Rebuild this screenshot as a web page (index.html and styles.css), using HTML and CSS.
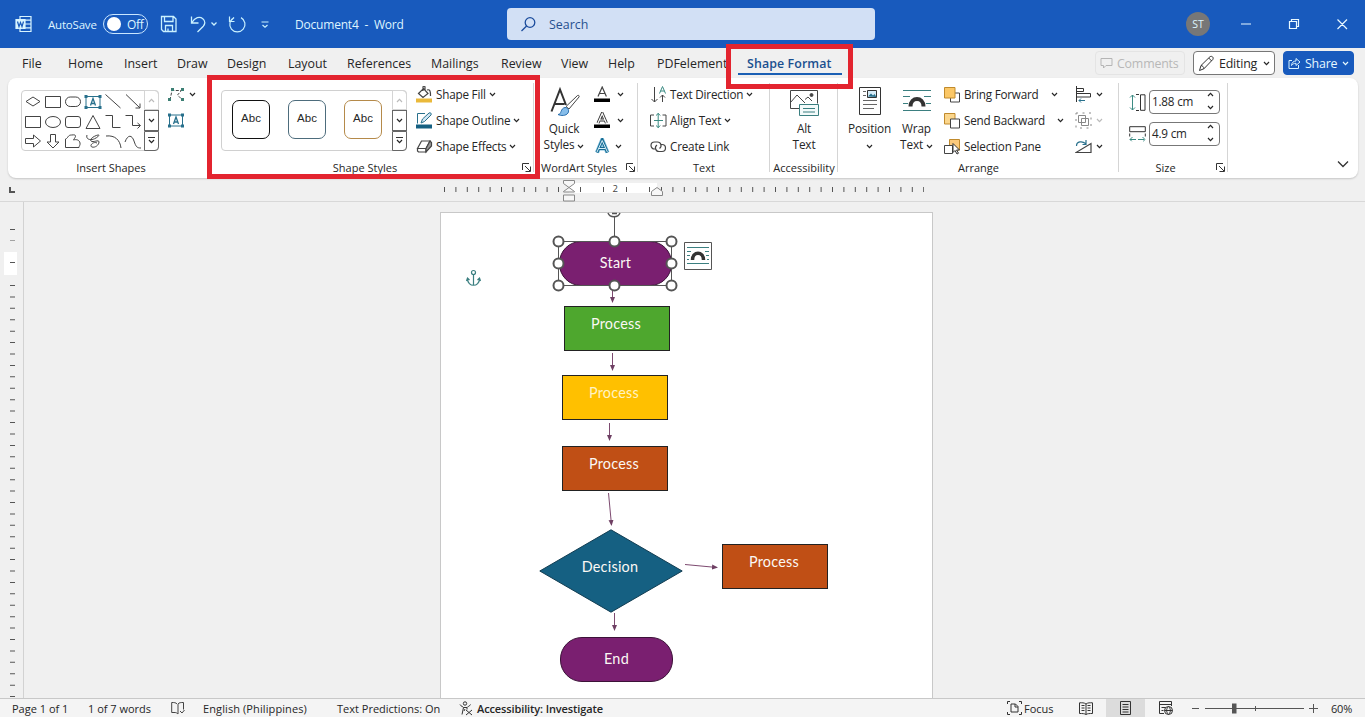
FILE: index.html
```html
<!DOCTYPE html>
<html lang="en">
<head>
  <meta charset="UTF-8" />
  <title>Document4 - Word</title>
  <meta name="viewport" content="width=device-width, initial-scale=1">
  <link rel="stylesheet" href="styles.css">
</head>
<body>
  <svg class="defs" width="0" height="0">
    <symbol id="chev" viewBox="0 0 7 5"><path d="M1 1l2.5 2.6L6 1" fill="none" stroke="currentColor" stroke-width="1.2"/></symbol>
    <symbol id="launch" viewBox="0 0 9 9"><path d="M.5 7V.5H7M3 3l5 5M8.5 3.5v5h-5" fill="none" stroke="#333"/></symbol>
  </svg>

  <header class="titlebar">
    <svg class="logo" width="18" height="18" viewBox="0 0 18 18" fill="none" stroke="#d8f4ff" stroke-width="1.2">
      <path d="M5 4V1.5h11v15H5V14M10 5.2h6M10 9h6M10 12.8h6"/>
      <path d="M1 4.5h9v9H1z" fill="#d8f4ff"/>
      <path d="M2.5 6.5l1.500 5 1.500-4 1.500 4 1.500-5" stroke="#185abd"/>
    </svg>
    <span class="autosave">AutoSave</span>
    <span class="switch"><i></i>Off</span>
    <svg class="quick" width="112" height="20" viewBox="0 0 112 20" fill="none" stroke="#c9f1ff" stroke-width="1.3">
      <path d="M1.500 2.500h12l2.500 2.500v12.500H3.500l-2-2zM4.500 2.500v5h8.500v-5M5.500 17.500v-6h7v6M8 17.500v-3"/>
      <path d="M31.500 2.500v6.500h7M31.800 8.700c3-5.500 8-6.500 11-4s2.200 5.500.5 7.500L37.500 18"/>
      <path d="M51.500 8.500l2.500 2.500 2.500-2.500"/>
      <path d="M69.500 2.500v5h5M81 3.600a7.600 7.600 0 1 1-7-.1l-3.500 3.500" stroke-width="1.200"/>
      <path d="M101.500 8h7M102.500 11l2.500 2.300 2.500-2.300" stroke-width="1.200"/>
    </svg>
    <span class="doc-title">Document4&nbsp; -&nbsp; Word</span>
    <div class="search">
      <svg width="17" height="17" viewBox="0 0 17 17" fill="none" stroke="#1b4c9c" stroke-width="1.3"><circle cx="10" cy="6.500" r="4.800"/><path d="M6.600 10L1.500 15"/></svg>
      <span>Search</span>
    </div>
    <span class="avatar">ST</span>
    <svg class="window-buttons" width="110" height="14" viewBox="0 0 110 14" fill="none" stroke="#e8f8ff" stroke-width="1.2">
      <path d="M1 7h10M49.500 4.500h7v7h-7zM51.500 4.500V2.500h7v7h-2M97.500 2.500l9.500 9.500M107 2.500l-9.500 9.500"/>
    </svg>
  </header>

  <nav class="tabs">
    <span>File</span><span>Home</span><span>Insert</span><span>Draw</span><span>Design</span><span>Layout</span><span>References</span><span>Mailings</span><span>Review</span><span>View</span><span>Help</span><span>PDFelement</span>
    <span class="active">Shape Format</span>
    <div class="tab-actions">
      <span class="btn comments"><svg width="13" height="12" viewBox="0 0 13 12" fill="none" stroke="#b5b5b5"><path d="M1 1.500h11v7H6L3.500 11V8.500H1z"/></svg>Comments</span>
      <span class="btn editing"><svg width="17" height="17" viewBox="0 0 17 17" fill="none" stroke="#333"><path d="M1.500 15.500L3 10.500 12 1.700c2-1.200 4 .8 2.800 2.800L6 13.700zM3 10.500c1.600.2 2.800 1.500 3 3.200M10.700 3l3 3"/></svg>Editing<svg class="chev"><use href="#chev"/></svg></span>
      <span class="btn share"><svg width="13" height="12" viewBox="0 0 13 12" fill="none" stroke="#d7f3ff"><path d="M4 3.500H1v8h9.500V8M3.500 8.500c.3-3 2-4.500 4.500-4.500V1.500L12 5 8 8.500V6.300c-2 0-3.300.6-4.500 2.200z"/></svg>Share<svg class="chev"><use href="#chev"/></svg></span>
    </div>
  </nav>

  <section class="ribbon">
    <div class="group insert-shapes">
      <div class="body">
        <div class="gallery">
          <svg width="122" height="60" viewBox="0 0 122 60" fill="none" stroke="#444">
            <path d="M4 10.500l7-4.500 7 4.500-7 4.500zM23.500 5.500h15v11h-15z"/>
            <rect x="43.500" y="6" width="15" height="9.500" rx="4.700"/>
            <path d="M64 5.500h14v11H64z" stroke="#28708c"/>
            <path d="M62.500 4h3v3h-3zM76.500 4h3v3h-3zM62.500 15h3v3h-3zM76.500 15h3v3h-3z" fill="#28708c" stroke="none"/>
            <path d="M68.500 14.500l2.500-7 2.500 7M69.500 12.500h3" stroke="#28708c" stroke-width="1.300"/>
            <path d="M83.500 3.500l15 13.500M104 3.500l14 13.500M118 12.500V17h-4.500"/>
            <path d="M3.500 25.500h15v11h-15z"/>
            <ellipse cx="31" cy="31" rx="7.500" ry="5.500"/>
            <rect x="43.500" y="25.500" width="15" height="11" rx="2.500"/>
            <path d="M71 24.500l7 13H64zM83.500 24.500h7v12h8M103.500 24.500h7v10h7.500M115.500 32l3 2.500-3 3"/>
            <path d="M3.500 47.500h8V44l7 6-7 6v-3.500h-8zM28.500 43.500h5v7.500h3.500L31 57l-6-6h3.500z"/>
            <path d="M43.500 56.500V48c3-1 2-4 6-4 7-1 3 3 2 5 3-1 6 0 6.500 3 .5 2-1 3-1 4.500z"/>
            <path d="M65 44c-1 3 1 5 5 4.500s9-5 6-4.500-9 4-7 6 8-2 8 1-4 6-7 5 1-6 5-4"/>
            <path d="M84 45c9-1 14 4 15 12M103 51c3-8 7-7 9-1s3 7 7 7"/>
          </svg>
          <div class="scroller"><span class="off"><svg class="chev up"><use href="#chev"/></svg></span><span><svg class="chev"><use href="#chev"/></svg></span><span class="more"><svg class="chev"><use href="#chev"/></svg></span></div>
        </div>
        <div class="stack edit-shape">
          <span class="row"><svg width="17" height="15" viewBox="0 0 17 15" fill="none" stroke="#444"><path d="M2 13l2-9.500h9.500L9.500 8l5 5" stroke-dasharray="3 1.500"/><path d="M3 1h3v3H3zM13 1h3v3h-3zM0 11h3v3H0zM13 11h3v3h-3z" fill="#3c7f74" stroke="none"/></svg><svg class="chev"><use href="#chev"/></svg></span>
          <span class="row"><svg width="17" height="15" viewBox="0 0 17 15" fill="none" stroke="#28708c"><path d="M1.500 2h13v11h-13z"/><path d="M0 .5h3v3H0zM13 .5h3v3h-3zM0 11.500h3v3H0zM13 11.500h3v3h-3z" fill="#28708c" stroke="none"/><path d="M5.500 11l2.500-7 2.500 7M6.500 9h3" stroke-width="1.300"/></svg></span>
        </div>
      </div>
      <div class="label">Insert Shapes</div>
    </div>

    <div class="group shape-styles">
      <div class="body">
        <div class="gallery">
          <div class="presets"><span>Abc</span><span class="blue">Abc</span><span class="gold">Abc</span></div>
          <div class="scroller"><span class="off"><svg class="chev up"><use href="#chev"/></svg></span><span><svg class="chev"><use href="#chev"/></svg></span><span class="more"><svg class="chev"><use href="#chev"/></svg></span></div>
        </div>
        <div class="stack">
          <span class="row"><svg width="17" height="17" viewBox="0 0 17 17" fill="none" stroke="#444"><path d="M2.500 7.500l5-5 4.500 5-5 4zM7 5V.8C7.500 0 8.800 0 9 1v3M11 4c3-1 3.500 1 3.500 6" stroke-width="1.200"/><path d="M0 12.500h16v4H0z" fill="#eab93a" stroke="none"/></svg>Shape Fill<svg class="chev"><use href="#chev"/></svg></span>
          <span class="row"><svg width="17" height="17" viewBox="0 0 17 17" fill="none" stroke="#28708c"><path d="M9 1.500H1.500v10"/><path d="M5 11l1.500-4L13 1c1.500-.8 2.800.5 2 2L8.500 9.500z" fill="#cfe6f5"/><path d="M0 12.500h16v4H0z" fill="#156082" stroke="none"/></svg>Shape Outline<svg class="chev"><use href="#chev"/></svg></span>
          <span class="row"><svg width="17" height="17" viewBox="0 0 17 17" fill="none" stroke="#444" stroke-width="1.2"><path d="M5.500 3h8.500L10 10.500H1.500zM1.500 10.500V13l1 1H10v-3.500"/><path d="M10 10.500L14 3l1.500 1.500V8L10 14z" fill="#999"/></svg>Shape Effects<svg class="chev"><use href="#chev"/></svg></span>
        </div>
      </div>
      <div class="label">Shape Styles<svg class="launch"><use href="#launch"/></svg></div>
    </div>

    <div class="group wordart">
      <div class="body">
        <div class="big">
          <svg width="32" height="32" viewBox="0 0 32 32" fill="none"><path d="M3.500 25.500L12 3.500 18 19M6.500 18h10" stroke="#333" stroke-width="2"/><path d="M18 20.500L29.500 9.500c1.500-.5 2 .5 1.500 1.500L21 23z" fill="#fff" stroke="#444"/><path d="M10 28.500c4 0 2-6 7-7 3 0 4.500 3 3 5.500-2 3-7 3-10 1.500z" fill="#86bdea" stroke="#2a6fae"/></svg>
          <span>Quick</span><span>Styles <svg class="chev"><use href="#chev"/></svg></span>
        </div>
        <div class="stack">
          <span class="row"><svg width="17" height="17" viewBox="0 0 17 17"><path d="M4 10.500L8.200 1l4.200 9.500M5.500 7.500h5.500" fill="none" stroke="#444" stroke-width="1.2"/><path d="M0 12.500h16v3.500H0z"/></svg><svg class="chev"><use href="#chev"/></svg></span>
          <span class="row"><svg width="17" height="17" viewBox="0 0 17 17"><path d="M4 11L8.200 1.500l4.200 9.500M5.500 8h5.500" fill="none" stroke="#333" stroke-width="3"/><path d="M4 11L8.200 1.500l4.200 9.500M5.500 8h5.500" fill="none" stroke="#fff" stroke-width="1.2"/><path d="M0 12.500h16v3.500H0z"/></svg><svg class="chev"><use href="#chev"/></svg></span>
          <span class="row glow"><svg width="17" height="17" viewBox="0 0 17 17" fill="none"><path d="M3 14.500L8.200 2l5.200 12.500M5 10.500h6.500" stroke="#79bcdc" stroke-width="4.200"/><path d="M3 14.500L8.200 2l5.200 12.500M5 10.500h6.500" stroke="#176a91" stroke-width="2.800"/><path d="M3 14L8.200 2.500 13.400 14M5 10.500h6.500" stroke="#d9f0fa" stroke-width="1"/></svg><svg class="chev"><use href="#chev"/></svg></span>
        </div>
      </div>
      <div class="label">WordArt Styles<svg class="launch"><use href="#launch"/></svg></div>
    </div>

    <div class="group text-group">
      <div class="body">
        <div class="stack">
          <span class="row"><svg width="17" height="17" viewBox="0 0 17 17" fill="none" stroke="#444"><path d="M4.500 1v15M1.500 13l3 3 3-3M12.500 16V9M10 11.500L12.500 9l2.500 2.500"/><path d="M9.500 7.500l3-7 3 7M10.500 5h4" stroke="#3b8b83"/></svg>Text Direction<svg class="chev"><use href="#chev"/></svg></span>
          <span class="row"><svg width="17" height="15" viewBox="0 0 17 15" fill="none" stroke="#444"><path d="M4 2H.5v11H4M12.500 2H16v11h-3.500"/><path d="M8.200 0v15M6 2.500L8.200.5l2.200 2M6 12.500l2.200 2 2.200-2M4 7.500h9" stroke="#3b8b83"/></svg>Align Text<svg class="chev"><use href="#chev"/></svg></span>
          <span class="row"><svg width="17" height="13" viewBox="0 0 17 13" fill="none" stroke="#444" stroke-width="1.2"><path d="M6 9H4.500a3.500 3.500 0 0 1 0-7h3a3.500 3.500 0 0 1 2 6.400M10.500 4.500h1.500a3.500 3.500 0 0 1 0 7H9a3.500 3.500 0 0 1-2-6.400"/></svg>Create Link</span>
        </div>
      </div>
      <div class="label">Text</div>
    </div>

    <div class="group access">
      <div class="body">
        <div class="big">
          <svg width="30" height="32" viewBox="0 0 30 32" fill="none" stroke="#444"><path d="M10 22.500H1.500v-18h27v13M1.500 16.500L8 9l8 8M16 13.500l3-2.500 4 4"/><circle cx="22.500" cy="9" r="1.500" fill="#444"/><path d="M10.500 18.500h19v11h-19z" fill="#f3fafa" stroke="#3b7f80"/><path d="M14 22.500h12M14 26h12" stroke="#3b7f80"/></svg>
          <span>Alt</span><span>Text</span>
        </div>
      </div>
      <div class="label">Accessibility</div>
    </div>

    <div class="group arrange">
      <div class="body">
        <div class="big position">
          <svg width="22" height="32" viewBox="0 0 22 32" fill="none" stroke="#333"><path d="M.5 1.500h21v27H.5z"/><path d="M4 5.500h3M4 9.500h3M4 14.500h14M4 18.500h14M4 22.500h11" stroke="#666"/><path d="M8.500 4.500h9v7h-9z" fill="#d6ecf8"/><path d="M9 10.500l3-3 2 2 1.500-1.500 2 3z" fill="#28708c" stroke="none"/></svg>
          <span>Position</span><span><svg class="chev"><use href="#chev"/></svg></span>
        </div>
        <div class="big wrap">
          <svg width="28" height="32" viewBox="0 0 28 32" fill="none"><path d="M0 4.500h28M0 10.500h7M21 10.500h7M0 17.500h5M23 17.500h5M0 24.500h28" stroke="#3b7f80"/><path d="M7.500 20.500c0-10 13-10 13 0" stroke="#333" stroke-width="4"/></svg>
          <span>Wrap</span><span>Text <svg class="chev"><use href="#chev"/></svg></span>
        </div>
        <div class="stack order">
          <span class="row"><svg width="16" height="17" viewBox="0 0 16 17" fill="none" stroke="#444"><path d="M11 7h4.500v9h-9v-4"/><path d="M.5 1.500H11V12H.5z" fill="#fbc766" stroke="#c08a2c"/></svg>Bring Forward<svg class="chev"><use href="#chev"/></svg></span>
          <span class="row"><svg width="16" height="17" viewBox="0 0 16 17"><path d="M.5 1.500H11V12H.5z" fill="#fbd68c" stroke="#c08a2c"/><path d="M6.500 7h9v9h-9z" fill="#fff" stroke="#444"/></svg>Send Backward<svg class="chev"><use href="#chev"/></svg></span>
          <span class="row"><svg width="16" height="17" viewBox="0 0 16 17" fill="#fff"><path d="M5.500 1.500h10V12h-10z" fill="#fbc97c" stroke="#c08a2c"/><path d="M.5 7.500h8v8h-8z" stroke="#444"/><path d="M9 5.500v9l2-2 2 3.500 1.500-.8-2-3.200h3z" stroke="#333"/></svg>Selection Pane</span>
        </div>
        <div class="stack align">
          <span class="row"><svg width="17" height="17" viewBox="0 0 17 17" fill="none" stroke="#333"><path d="M1.500 0v16M1.500 2.500h7v3h-7M1.500 7.500H15.500v3.500H1.500"/><path d="M4 14.500h6M6 12.500l-2 2 2 2" stroke="#28708c"/></svg><svg class="chev"><use href="#chev"/></svg></span>
          <span class="row dim"><svg width="17" height="17" viewBox="0 0 17 17" fill="none" stroke="#888"><path d="M3.500 3.500h7v7h-7zM6.500 6.500h7v7h-7z"/><path d="M1 1h15v15H1z" stroke-dasharray="2 4.500"/></svg><svg class="chev"><use href="#chev"/></svg></span>
          <span class="row"><svg width="17" height="17" viewBox="0 0 17 17" fill="none" stroke="#444" stroke-width="1.2"><path d="M1 14.500h15v-9z"/><path d="M1.500 8c0-5 6-5 9-2.500M7.500 6.500h3.500V2" stroke="#28708c"/></svg><svg class="chev"><use href="#chev"/></svg></span>
        </div>
      </div>
      <div class="label">Arrange</div>
    </div>

    <div class="group size">
      <div class="body">
        <div class="field">
          <svg width="17" height="17" viewBox="0 0 17 17" fill="none"><path d="M3.500 1v15M1 3.500L3.500 1 6 3.500M1 13.500L3.500 16 6 13.500" stroke="#3b8b83"/><path d="M7 .5h3M7 16.500h3M11.500 .8h4.500v15.500h-4.500z" stroke="#333"/></svg>
          <span class="input">1.88 cm<i><svg class="chev up"><use href="#chev"/></svg><svg class="chev"><use href="#chev"/></svg></i></span>
        </div>
        <div class="field">
          <svg width="17" height="17" viewBox="0 0 17 17" fill="none"><path d="M1 13.500h15M3.500 11L1 13.500 3.500 16M13.500 11l2.500 2.500-2.500 2.500" stroke="#3b8b83" stroke-dasharray="6 2"/><path d="M.7.700h15.600v5H.7zM.7 7.500v3M16.300 7.500v3" stroke="#333"/></svg>
          <span class="input">4.9 cm<i><svg class="chev up"><use href="#chev"/></svg><svg class="chev"><use href="#chev"/></svg></i></span>
        </div>
      </div>
      <div class="label">Size<svg class="launch"><use href="#launch"/></svg></div>
    </div>
    <svg class="collapse" width="12" height="8" viewBox="0 0 12 8"><path d="M1 1.500l5 5 5-5" fill="none" stroke="#333" stroke-width="1.3"/></svg>
  </section>

  <div class="ruler">
    <svg width="1365" height="23" viewBox="0 0 1365 23" fill="none" stroke="#555">
      <path d="M10 8v5h5" stroke-width="2"/>
      <path d="M569 4h88v10h-88z" fill="#fff" stroke="none"/>
      <path d="M444 10.500h118M580 10.500h1M603 10.500h1M626 10.500h1M649 10.500h1M661 10.500h263" stroke-width="5" stroke-dasharray="1 10.400"/>
      <path d="M563.500 1.500h11v3l-5.500 4 5.500 4v.5h-11v-.5l5.500-4-5.500-4zM563.500 16h11v6h-11zM651.500 16.500v-4l5.500-4 5.500 4v4z" fill="#f7f7f7" stroke="#888"/>
      <text x="612.500" y="13">2</text>
    </svg>
  </div>

  <main class="workspace">
    <div class="side-ruler">
      <svg width="23" height="496" viewBox="0 0 23 496" fill="none" stroke="#555">
        <path d="M4 50h13v23H4z" fill="#fff" stroke="none"/>
        <path d="M12.500 27v12M12.500 60v1M12.500 83v413" stroke-width="5" stroke-dasharray="1 10.420"/>
      </svg>
    </div>
    <div class="paper">
      <svg class="connectors" width="491" height="486" viewBox="441 212 491 486" fill="none" stroke="#7d4a70">
        <defs><marker id="tip" viewBox="0 0 6 6" refX="5" refY="3" markerWidth="6" markerHeight="6" orient="auto"><path d="M0 .5l6 2.500-6 2.500z" fill="#6e3f63" stroke="none"/></marker></defs>
        <g marker-end="url(#tip)">
          <path d="M612.500 286v16"/><path d="M612.500 353v17"/><path d="M609.500 423v17"/><path d="M608.500 493l3 32"/><path d="M614.500 613v17"/><path d="M685 564.500l32 3"/>
        </g>
      </svg>
      <div class="node round start">Start</div>
      <div class="node green">Process</div>
      <div class="node yellow">Process</div>
      <div class="node orange">Process</div>
      <div class="node decision">
        <svg width="144" height="84" viewBox="0 0 144 84"><path d="M.8 42L72 .8 143.200 42 72 83.200z" fill="#156082" stroke="#123d52"/></svg>
        <span>Decision</span>
      </div>
      <div class="node orange branch">Process</div>
      <div class="node round end">End</div>
      <svg class="selection" width="491" height="100" viewBox="441 212 491 100" fill="#fff" stroke="#555">
        <path d="M558.500 241.500h113v44h-113zM614.500 241v-24" fill="none"/>
        <path d="M608 213c2 5 10 5 12 0M612 213.500h5" fill="none" stroke-width="1.500"/>
        <g stroke-width="2"><circle cx="558.500" cy="241.500" r="5"/><circle cx="614.500" cy="241.500" r="5"/><circle cx="671.500" cy="241.500" r="5"/><circle cx="558.500" cy="263.500" r="5"/><circle cx="671.500" cy="263.500" r="5"/><circle cx="558.500" cy="285.500" r="5"/><circle cx="614.500" cy="285.500" r="5"/><circle cx="671.500" cy="285.500" r="5"/></g>
        <path d="M684.500 242.500h27v27h-27z"/>
        <path d="M687 247.500h22M687 251.500h4M705 251.500h4M687 255.500h3M706 255.500h3M687 259.500h2M707 259.500h2M687 263.500h22" stroke="#3b7f80"/>
        <path d="M692.500 260c0-9 11-9 11 0" fill="none" stroke="#333" stroke-width="3.500"/>
        <g fill="none" stroke="#3b7f80" stroke-width="1.200"><circle cx="473.500" cy="272.500" r="2"/><path d="M473.500 274.500v11M467.500 278.500c0 9 12 9 12 0M466.500 281l1-3 2 2M480.500 281l-1-3-2 2"/></g>
      </svg>
    </div>
  </main>

  <footer class="status">
    <span class="pages">Page 1 of 1</span>
    <span class="words">1 of 7 words</span>
    <svg class="book" width="14" height="14" viewBox="0 0 14 14" fill="none" stroke="#444"><path d="M6 3C5 1.500 3 1.500.7 1.500v10H4c1 0 2 .5 3 1.500V3c1-1.500 3-1.500 5.500-1.500v7M9 10l2 2 2.500-3"/></svg>
    <span class="lang">English (Philippines)</span>
    <span class="predict">Text Predictions: On</span>
    <span class="check"><svg width="14" height="15" viewBox="0 0 14 15" fill="none" stroke="#333"><circle cx="6" cy="2.500" r="1.700"/><path d="M1 3.500c1 2 3 2 3.500 3L3 13.500M11.500 3.500c-1 2-3 2-3.500 3v2M4.500 6.500H8M5 10l1-2M7 9l6 5M13 9l-6 5"/></svg>Accessibility: Investigate</span>
    <span class="focus"><svg width="15" height="14" viewBox="0 0 15 14" fill="none" stroke="#333"><path d="M3 .5H.5V3M.5 11v2.500H3M12 .5h2.500V3M14.500 11v2.500H12M4 3h4.500L11 5.500V11H4zM8 3v3h3"/></svg>Focus</span>
    <svg class="view" width="14" height="13" viewBox="0 0 14 13" fill="none" stroke="#333"><path d="M7 2v10.500M7 2C5 .5 3 .8.5.8v10.700c3 0 5 0 6.500 1 1.500-1 3.500-1 6.500-1V.8C11 .8 9 .5 7 2zM2.500 3.500h3M2.500 6h3M2.500 8.500h3M8.500 3.500h3M8.500 6h3M8.500 8.500h3"/></svg>
    <span class="view current"><svg width="11" height="14" viewBox="0 0 11 14" fill="none" stroke="#333"><path d="M.5.5h10v13H.5zM2.500 3.500h6M2.500 6h6M2.500 8.500h6M2.500 11h6"/></svg></span>
    <svg class="view web" width="14" height="14" viewBox="0 0 14 14" fill="none" stroke="#333"><path d="M5 12.500H.5V.5h12V5M.5 3.500h12M2.500 6.500h4M2.500 9.500h2"/><circle cx="9.500" cy="9.500" r="4"/><path d="M5.500 9.500h8M9.500 5.500c-3 3-2 6 0 8 2-2 3-5 0-8z"/></svg>
    <svg class="zoom" width="130" height="14" viewBox="0 0 130 14" fill="none" stroke="#555"><path d="M2 7.500h7M15 7.500h99M65.500 5v5M119 7.500h9M123.500 3v9"/><path d="M42 2.500h4.500v10H42z" fill="#555" stroke="none"/></svg>
    <span class="percent">60%</span>
  </footer>

  <div class="callout callout-styles"></div>
  <div class="callout callout-tab"></div>
</body>
</html>
```
FILE: styles.css
```css
* {
  box-sizing: border-box;
}

body {
  margin: 0;
  width: 1365px;
  height: 717px;
  overflow: hidden;
  position: relative;
  display: flex;
  flex-direction: column;
  font-family: "Open Sans", "Noto Sans", sans-serif;
  font-size: 12px;
  color: #262626;
  background: #f0f0f0;
}

svg {
  display: block;
  flex: none;
}

.defs {
  position: absolute;
}

.chev {
  width: 7px;
  height: 5px;
  display: inline-block;
}

.up {
  transform: scaleY(-1);
}

/* title bar */
.titlebar {
  height: 48px;
  flex: none;
  display: flex;
  align-items: center;
  padding-left: 15px;
  background: #185abd;
  color: #dff5ff;
}

.autosave {
  width: 55px;
  margin-left: 15px;
  font-size: 11.5px;
  letter-spacing: -0.2px;
}

.switch {
  width: 45px;
  height: 20px;
  display: flex;
  align-items: center;
  gap: 6px;
  padding-left: 3px;
  border: 1px solid #c9e6ff;
  border-radius: 10px;
  letter-spacing: -0.3px;
}

.switch i {
  width: 14px;
  height: 14px;
  border-radius: 50%;
  background: #fff;
}

.quick {
  margin-left: 12px;
}

.doc-title {
  width: 212px;
  margin-left: 23px;
  letter-spacing: -0.2px;
  white-space: nowrap;
}

.search {
  width: 368px;
  height: 32px;
  display: flex;
  align-items: center;
  gap: 12px;
  padding-left: 13px;
  border-radius: 4px;
  background: #d2e0f5;
  color: #27508f;
  font-size: 12.4px;
}

.avatar {
  width: 24px;
  height: 24px;
  margin-left: 311px;
  border-radius: 50%;
  background: #777;
  text-align: center;
  line-height: 24px;
  font-size: 10.5px;
}

.window-buttons {
  margin-left: 30px;
}

/* tab row */
.tabs {
  height: 30px;
  flex: none;
  display: grid;
  grid-template-columns: 46px 56px 53px 50px 61px 59px 84px 70px 60px 47px 49px 90px 90px 1fr;
  align-items: center;
  padding-left: 22px;
  font-size: 12.4px;
}

.active {
  color: #1a4f8f;
  font-weight: 600;
  letter-spacing: 0.1px;
  white-space: nowrap;
}

.tab-actions {
  display: flex;
  justify-content: flex-end;
  gap: 8px;
  padding-right: 11px;
}

.btn {
  height: 24px;
  display: flex;
  align-items: center;
  gap: 4px;
  border: 1px solid #777;
  border-radius: 4px;
  background: #fff;
  padding: 0 4px;
  font-size: 12.4px;
  letter-spacing: -0.2px;
}

.comments {
  width: 90px;
  border-color: #e4e4e4;
  background: #f0f0f0;
  color: #b8b8b8;
}

.editing {
  width: 82px;
}

.share {
  width: 71px;
  border-color: #185abd;
  background: #185abd;
  color: #e6f8ff;
}

.btn .chev {
  margin-left: auto;
}

/* ribbon */
.ribbon {
  height: 100px;
  flex: none;
  display: flex;
  margin: 0 7px 0 8px;
  border-radius: 8px;
  background: #fff;
  box-shadow: 0 1px 2px rgba(0,0,0,0.18);
}

.group {
  display: flex;
  flex-direction: column;
  position: relative;
  padding-top: 3px;
}

.group::after {
  content: "";
  position: absolute;
  right: 0;
  top: 5px;
  bottom: 6px;
  border-right: 1px solid #d5d5d5;
}

.body {
  height: 79px;
  display: flex;
}

.label {
  height: 16px;
  line-height: 16px;
  font-size: 11px;
  text-align: center;
  white-space: nowrap;
}

.launch {
  position: absolute;
  right: 3px;
  bottom: 6px;
  width: 9px;
  height: 9px;
}

.stack {
  display: flex;
  flex-direction: column;
}

.row {
  height: 26px;
  display: flex;
  align-items: center;
  gap: 3px;
  font-size: 11.7px;
  letter-spacing: -0.2px;
  white-space: nowrap;
}

.gallery {
  height: 61px;
  margin-top: 9px;
  display: flex;
  border: 1px solid #d0d0d0;
  border-radius: 4px;
}

.scroller {
  width: 15px;
  display: flex;
  flex-direction: column;
  margin: -1px -1px -1px auto;
}

.scroller span {
  flex: 1;
  display: flex;
  align-items: center;
  justify-content: center;
  border: 1px solid #666;
}

.scroller .off {
  color: #bbb;
  border-color: #d5d5d5;
  border-radius: 0 4px 0 0;
}

.scroller .more {
  flex-direction: column;
  gap: 1px;
  border-radius: 0 0 4px 0;
}

.more::before {
  content: "";
  width: 7px;
  border-top: 1px solid #333;
}

.big {
  display: flex;
  flex-direction: column;
  align-items: center;
  padding-top: 5px;
  line-height: 16px;
  font-size: 11.8px;
  letter-spacing: -0.15px;
  white-space: nowrap;
}

.big > svg {
  margin-bottom: 2px;
}

.insert-shapes {
  width: 199px;
  padding-left: 13px;
}

.insert-shapes::after {
  display: none;
}

.insert-shapes .gallery {
  width: 138px;
}

.insert-shapes .label {
  padding-right: 6px;
}

.edit-shape {
  margin-left: 9px;
}

.edit-shape .row {
  gap: 4px;
}

.shape-styles {
  width: 327px;
  padding-left: 14px;
}

.shape-styles .gallery {
  width: 186px;
  margin-right: 9px;
}

.shape-styles .label {
  padding-right: 25px;
}

.presets {
  display: flex;
  gap: 18px;
  padding: 9px 0 0 10px;
}

.presets span {
  width: 38px;
  height: 39px;
  border: 1px solid #111;
  border-radius: 7px;
  text-align: center;
  line-height: 34px;
  font-family: "Liberation Sans", sans-serif;
  font-size: 11.5px;
}

.presets .blue {
  border-color: #4d6c7c;
}

.presets .gold {
  border-color: #b58a4a;
}

.wordart {
  width: 104px;
  padding-left: 7px;
}

.wordart .big {
  width: 46px;
}

.wordart .stack {
  margin-left: 7px;
}

.wordart .row {
  gap: 6px;
}

.wordart .glow {
  gap: 4px;
}

.wordart .label {
  text-align: left;
}

.text-group {
  width: 132px;
  padding-left: 12px;
}

.text-group .label {
  padding-right: 12px;
}

.access {
  width: 68px;
}

.access .big {
  width: 68px;
}

.arrange {
  width: 281px;
  padding-left: 8px;
}

.position {
  width: 47px;
}

.wrap {
  width: 47px;
}

.order {
  width: 131px;
  margin-left: 4px;
}

.order .row {
  width: 122px;
  gap: 4px;
}

.order .row .chev {
  margin-left: 8px;
}

.align .row {
  gap: 4px;
}

.dim {
  color: #bbb;
}

.arrange .label {
  padding-right: 8px;
}

.size {
  width: 109px;
  padding-left: 10px;
}

.size .body {
  flex-direction: column;
  gap: 8px;
  padding-top: 9px;
}

.field {
  height: 24px;
  display: flex;
  align-items: center;
  gap: 3px;
}

.input {
  width: 71px;
  height: 24px;
  display: flex;
  align-items: center;
  padding: 0 5px 2px 2px;
  border: 1px solid #777;
  border-radius: 4px;
  font-size: 11.7px;
  letter-spacing: -0.2px;
}

.input i {
  height: 18px;
  display: flex;
  flex-direction: column;
  justify-content: space-between;
  margin-left: auto;
}

.size .label {
  padding-right: 26px;
}

.collapse {
  margin: 82px 9px 0 auto;
}

/* rulers and document */
.ruler {
  height: 24px;
  flex: none;
  border-bottom: 1px solid #d8d8d8;
  padding-top: 1px;
}

.ruler text {
  font-size: 9.5px;
  fill: #444;
  stroke: none;
}

.workspace {
  height: 496px;
  flex: none;
  display: flex;
  overflow: hidden;
}

.side-ruler {
  width: 24px;
  border-right: 1px solid #d2d2d2;
}

.paper {
  width: 493px;
  height: 490px;
  margin: 10px 0 0 416px;
  position: relative;
  flex: none;
  border: 1px solid #c8c8c8;
  background: #fff;
}

.connectors, .selection {
  position: absolute;
  left: 0;
  top: -1px;
}

.node {
  position: absolute;
  width: 106px;
  height: 45px;
  padding-right: 2px;
  border: 1px solid #222;
  color: #fbf8f4;
  font-family: Lato, sans-serif;
  font-size: 14.4px;
  letter-spacing: 0.25px;
  text-align: center;
  line-height: 34px;
}

.round {
  width: 113px;
  padding-right: 0;
  border-radius: 22px;
  border-color: #3c1238;
  background: #7a1f70;
  line-height: 41px;
}

.start {
  left: 118px;
  top: 28px;
}

.green {
  left: 123px;
  top: 93px;
  background: #4ea72e;
}

.yellow {
  left: 121px;
  top: 162px;
  background: #ffc000;
  color: #fff3c4;
}

.orange {
  left: 121px;
  top: 233px;
  background: #c04f15;
}

.branch {
  left: 281px;
  top: 331px;
}

.decision {
  left: 98px;
  top: 316px;
  width: 144px;
  height: 84px;
  border: 0;
}

.decision span {
  display: block;
  margin-top: -63px;
  position: relative;
}

.end {
  left: 119px;
  top: 424px;
}

/* status bar */
.status {
  height: 19px;
  flex: none;
  display: flex;
  align-items: center;
  padding-left: 12px;
  border-top: 1px solid #c8c8c8;
  background: #f4f4f4;
  font-size: 11px;
  white-space: nowrap;
}

.pages {
  width: 76px;
}

.words {
  width: 83px;
}

.lang {
  width: 134px;
  margin-left: 18px;
  letter-spacing: 0.1px;
}

.predict {
  width: 122px;
}

.check {
  width: 548px;
  display: flex;
  align-items: center;
  gap: 4px;
  font-weight: 600;
  letter-spacing: -0.12px;
}

.focus {
  width: 72px;
  display: flex;
  align-items: center;
  gap: 2px;
}

.current {
  width: 39px;
  height: 19px;
  margin-left: 13px;
  display: flex;
  align-items: center;
  justify-content: center;
  background: #dcdcdc;
}

.web {
  margin-left: 14px;
}

.zoom {
  margin: 0 11px 0 17px;
}

.percent {
  letter-spacing: -0.2px;
}

/* red highlight frames */
.callout {
  position: absolute;
  border: 5px solid #e3242f;
}

.callout-styles {
  left: 207px;
  top: 75px;
  width: 333px;
  height: 104px;
}

.callout-tab {
  left: 726px;
  top: 44px;
  width: 127px;
  height: 45px;
  background: linear-gradient(#1a5fb4, #1a5fb4) 7px 24px / 104px 2px no-repeat;
}
```
